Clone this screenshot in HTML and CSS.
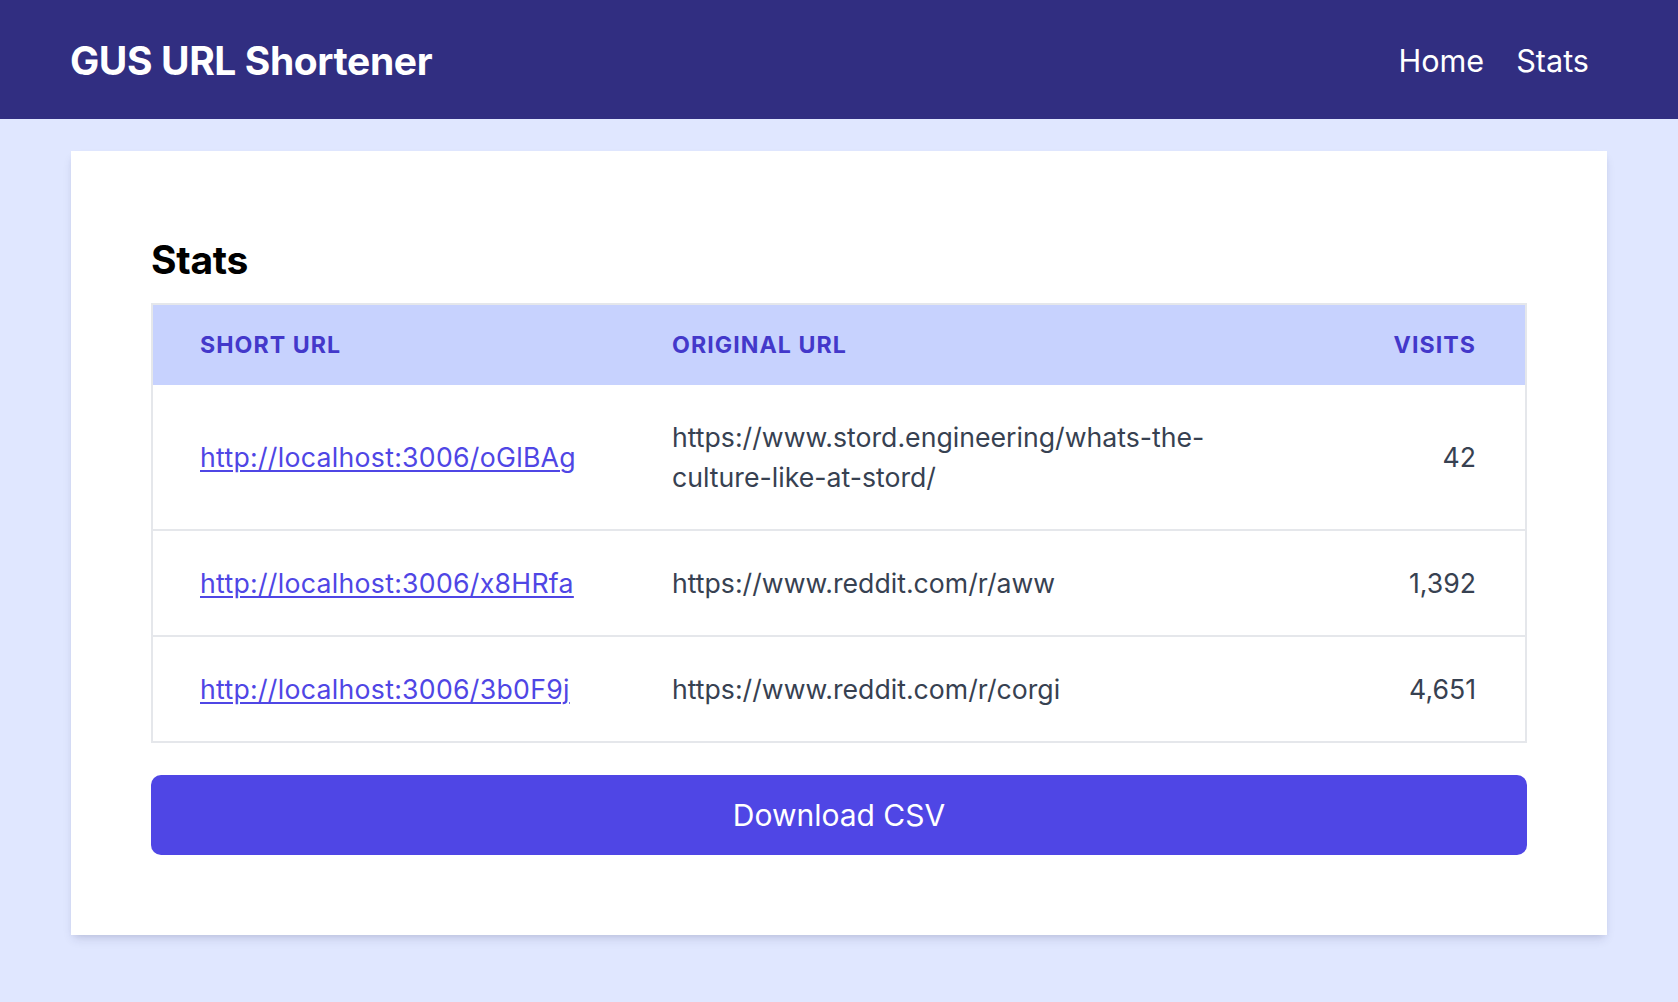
FILE: index.html
```html
<!DOCTYPE html>
<html lang="en">
<head>
<meta charset="utf-8">
<title>GUS URL Shortener - Stats</title>
<link rel="stylesheet" href="styles.css">
</head>
<body>
<header class="topbar">
  <div class="brand">GUS URL Shortener</div>
  <nav class="nav">
    <a class="nav-link" href="#">Home</a>
    <a class="nav-link" href="#">Stats</a>
  </nav>
</header>
<main class="page">
  <section class="card">
    <h1 class="title">Stats</h1>
    <div class="table-wrap">
      <table class="stats">
        <colgroup>
          <col class="col-short">
          <col class="col-orig">
          <col class="col-visits">
        </colgroup>
        <thead>
          <tr>
            <th class="th">Short URL</th>
            <th class="th th-orig">Original URL</th>
            <th class="th th-num">Visits</th>
          </tr>
        </thead>
        <tbody>
          <tr>
            <td class="td"><a class="short-link" href="#">http://localhost:3006/oGlBAg</a></td>
            <td class="td td-orig">https://www.stord.engineering/whats-the-culture-like-at-stord/</td>
            <td class="td td-num">42</td>
          </tr>
          <tr>
            <td class="td"><a class="short-link" href="#">http://localhost:3006/x8HRfa</a></td>
            <td class="td td-orig">https://www.reddit.com/r/aww</td>
            <td class="td td-num">1,392</td>
          </tr>
          <tr>
            <td class="td"><a class="short-link" href="#">http://localhost:3006/3b0F9j</a></td>
            <td class="td td-orig">https://www.reddit.com/r/corgi</td>
            <td class="td td-num">4,651</td>
          </tr>
        </tbody>
      </table>
    </div>
    <button class="download" type="button">Download CSV</button>
  </section>
</main>
</body>
</html>
```

FILE: styles.css
```css
* {
  box-sizing: border-box;
}

html, body {
  margin: 0;
  padding: 0;
}

body {
  font-family: "Inter", "Noto Sans", "Liberation Sans", sans-serif;
  background: #e0e7ff;
  min-height: 100vh;
  color: #374151;
}

.topbar {
  background: #312e81;
  display: flex;
  align-items: center;
  justify-content: space-between;
  height: 119px;
  padding: 2px 73px 0 70px;
}

.brand {
  color: #ffffff;
  font-size: 39px;
  font-weight: 700;
  line-height: 47px;
  letter-spacing: -0.4px;
}

.nav {
  display: flex;
  align-items: center;
}

.nav-link {
  color: #ffffff;
  text-decoration: none;
  font-size: 30.6px;
  line-height: 40px;
  padding: 0 16px;
}

.page {
  padding: 32px 71px;
}

.card {
  background: #ffffff;
  padding: 80px;
  box-shadow: 0 6px 10px -2px rgba(30, 30, 80, 0.12), 0 3px 6px -3px rgba(30, 30, 80, 0.12);
}

.title {
  margin: 0 0 14px;
  font-size: 39px;
  line-height: 58px;
  font-weight: 700;
  color: #000000;
  letter-spacing: -0.3px;
}

.table-wrap {
  border: 2px solid #e5e7eb;
}

.stats {
  width: 100%;
  border-collapse: collapse;
  table-layout: fixed;
}

.col-short {
  width: 472px;
}

.col-visits {
  width: 190px;
}

.th {
  background: #c7d2fe;
  color: #4338ca;
  font-size: 23.2px;
  font-weight: 700;
  text-transform: uppercase;
  letter-spacing: 0.045em;
  line-height: 33px;
  padding: 24px 47px 23px;
  text-align: left;
}

.th-num {
  text-align: right;
  padding-right: 49px;
}

.td {
  font-size: 26.67px;
  line-height: 40px;
  padding: 32px 47px;
  color: #374151;
  vertical-align: middle;
}

.td-orig {
  padding-right: 45px;
}

.td-num {
  text-align: right;
  padding-right: 49px;
}

.stats tbody tr + tr .td {
  border-top: 2px solid #e5e7eb;
}

.short-link {
  color: #4f46e5;
  text-decoration: underline;
  text-underline-offset: 3px;
  text-decoration-thickness: 2px;
  letter-spacing: 0.28px;
}

.download {
  display: block;
  width: 100%;
  margin-top: 32px;
  padding: 17px 16px 16px;
  border: none;
  border-radius: 10px;
  background: #4f46e5;
  color: #ffffff;
  font-family: inherit;
  font-size: 30px;
  line-height: 47px;
  font-weight: 400;
  cursor: pointer;
}
```
